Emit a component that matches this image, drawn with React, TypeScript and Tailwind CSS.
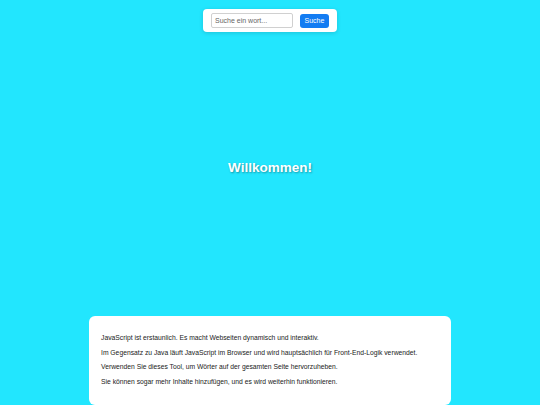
import React from 'react';

const lines = [
  'JavaScript ist erstaunlich. Es macht Webseiten dynamisch und interaktiv.',
  'Im Gegensatz zu Java läuft JavaScript im Browser und wird hauptsächlich für Front-End-Logik verwendet.',
  'Verwenden Sie dieses Tool, um Wörter auf der gesamten Seite hervorzuheben.',
  'Sie können sogar mehr Inhalte hinzufügen, und es wird weiterhin funktionieren.',
];

export default function App() {
  return (
    <div className="h-[405px] w-[540px] overflow-hidden bg-[#22e6fe] flex flex-col items-center font-['Liberation_Sans',Arial,sans-serif]">
      {/* Search bar */}
      <div className="mt-[9px] w-[134px] h-[23px] bg-white rounded-[4px] shadow-[0_1px_4px_rgba(0,0,0,0.15)] flex items-center px-[8px] gap-[7px]">
        <input
          className="w-[82px] h-[15px] border border-[#d0d0d0] rounded-[2px] px-[3px] text-[7px] text-[#333] placeholder:text-[#666] outline-none"
          placeholder="Suche ein wort..."
        />
        <button className="w-[29px] h-[14px] bg-[#137cf2] text-white text-[7px] rounded-[3px] leading-none">
          Suche
        </button>
      </div>

      {/* Title */}
      <div className="flex-1 flex items-center justify-center pb-[12px]">
        <h1 className="text-white font-bold text-[13.5px] [text-shadow:1px_1px_2px_rgba(0,0,0,0.35)]">
          Willkommen!
        </h1>
      </div>

      {/* Content */}
      <div className="w-[362px] h-[89px] bg-white rounded-[6px] px-[12px] pt-[15px]">
        {lines.map((l) => (
          <p key={l} className="text-[6.75px] leading-[14.5px] text-[#222]">
            {l}
          </p>
        ))}
      </div>
    </div>
  );
}
